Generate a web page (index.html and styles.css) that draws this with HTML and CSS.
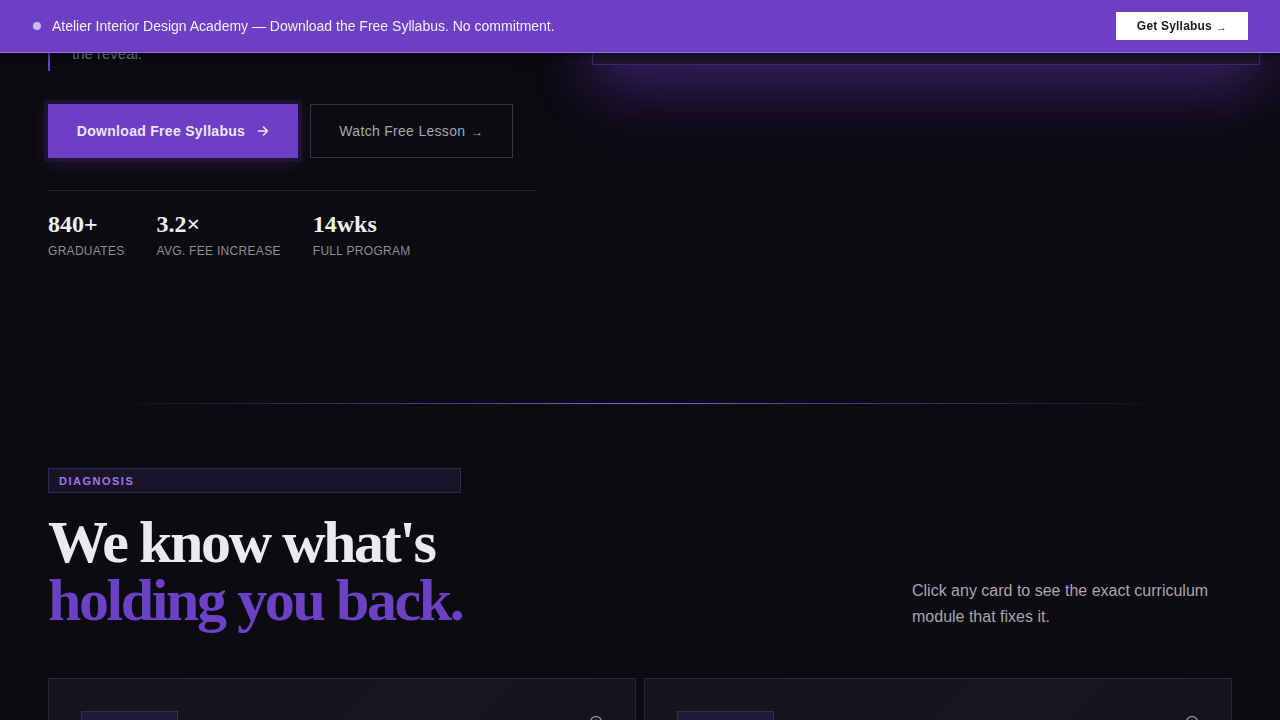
FILE: index.html
```html
<!DOCTYPE html>
<html lang="en">

<head>
    <meta charset="UTF-8">
    <meta name="viewport" content="width=device-width, initial-scale=1.0">
    <title>Atelier Interior Design Academy</title>
    <link rel="stylesheet" href="styles.css">
</head>

<body>
    <!-- sticky announcement bar -->
    <div class="topbar">
        <div class="topbar-msg">
            <span class="dot"></span>
            Atelier Interior Design Academy — Download the Free Syllabus. No commitment.
        </div>
        <a href="#" class="topbar-btn">Get Syllabus <span class="small-arrow">→</span></a>
    </div>

    <!-- hero -->
    <section class="hero">
        <div class="hero-left">
            <blockquote class="hero-quote">
                Every room tells a story. Our students learn to write it —<br>
                from the first sketch and mood board, all the way to<br>
                the reveal.
            </blockquote>

            <div class="hero-actions">
                <a href="#" class="btn btn-primary">Download Free Syllabus
                    <svg width="12" height="12" viewBox="0 0 12 12" fill="none" stroke="currentColor" stroke-width="1.6" stroke-linecap="round" stroke-linejoin="round">
                        <path d="M1.5 6h9M6.5 2l4 4-4 4" />
                    </svg>
                </a>
                <a href="#" class="btn btn-ghost">Watch Free Lesson <span class="ghost-arrow">→</span></a>
            </div>

            <div class="stats">
                <div class="stat">
                    <div class="stat-num">840+</div>
                    <div class="stat-label">Graduates</div>
                </div>
                <div class="stat">
                    <div class="stat-num">3.2×</div>
                    <div class="stat-label">Avg. Fee Increase</div>
                </div>
                <div class="stat">
                    <div class="stat-num">14wks</div>
                    <div class="stat-label">Full Program</div>
                </div>
            </div>
        </div>

        <div class="hero-right">
            <div class="hero-visual"></div>
        </div>
    </section>

    <div class="glow-line"></div>

    <!-- diagnosis -->
    <section class="diagnosis">
        <div class="tag">Diagnosis</div>
        <div class="diag-head">
            <h2>We know what's<br><span class="accent">holding you back.</span></h2>
            <p>Click any card to see the exact curriculum module that fixes it.</p>
        </div>

        <div class="cards">
            <div class="card">
                <div class="card-top">
                    <span class="card-chip">Problem 01</span>
                    <svg class="card-icon" width="14" height="14" viewBox="0 0 14 14" fill="none" stroke="#8d8a98" stroke-width="1.4">
                        <circle cx="7" cy="7" r="5.5" />
                        <path d="M7 4.5v5M4.5 7h5" />
                    </svg>
                </div>
            </div>
            <div class="card">
                <div class="card-top">
                    <span class="card-chip">Problem 02</span>
                    <svg class="card-icon" width="14" height="14" viewBox="0 0 14 14" fill="none" stroke="#8d8a98" stroke-width="1.4">
                        <circle cx="7" cy="7" r="5.5" />
                        <path d="M7 4.5v5M4.5 7h5" />
                    </svg>
                </div>
            </div>
        </div>
    </section>
</body>

</html>
```

FILE: styles.css
```css
/* base */
body {
    margin: 0;
    background-color: #0c0b10;
    color: #e9e7ef;
    font-family: "Liberation Sans", Arial, sans-serif;
    overflow: hidden;
}

a {
    text-decoration: none;
}

/* announcement bar */
.topbar {
    position: fixed;
    top: 0;
    left: 0;
    right: 0;
    z-index: 10;
    height: 52px;
    padding: 0 32px;
    display: flex;
    align-items: center;
    justify-content: space-between;
    background-color: #6c3fc5;
    border-bottom: 1px solid #9478dc;
    box-shadow: 0 2px 8px rgba(0, 0, 0, 0.6);
}

.topbar-msg {
    display: flex;
    align-items: center;
    font-size: 14px;
    color: #f3effb;
}

.dot {
    width: 8px;
    height: 8px;
    border-radius: 50%;
    background-color: #cbb8f1;
    margin: 0 11px 0 1px;
}

.topbar-btn {
    width: 132px;
    height: 28px;
    display: flex;
    align-items: center;
    justify-content: center;
    gap: 4px;
    background-color: #fff;
    color: #1b1a20;
    font-size: 12px;
    font-weight: bold;
    letter-spacing: 0.2px;
}

.small-arrow {
    font-size: 11px;
    font-weight: normal;
    position: relative;
    top: 1px;
}

/* hero */
.hero {
    margin-top: -6px;
    padding: 0 48px;
    display: grid;
    grid-template-columns: 488px 1fr;
    gap: 56px;
    height: 342px;
}

.hero-quote {
    margin: 0;
    padding: 0 0 5px 22px;
    border-left: 2px solid #6c3fc5;
    font-size: 15px;
    line-height: 24px;
    color: #7d7a88;
}

.hero-actions {
    display: flex;
    gap: 12px;
    margin-top: 33px;
}

.btn {
    height: 54px;
    box-sizing: border-box;
    display: flex;
    align-items: center;
    justify-content: center;
    font-size: 14px;
    letter-spacing: 0.3px;
}

.btn-primary {
    width: 250px;
    gap: 12px;
    background-color: #6c3fc5;
    color: #ece5fa;
    font-weight: bold;
    box-shadow: 0 0 0 4px rgba(60, 34, 110, 0.25), 0 4px 18px rgba(108, 63, 197, 0.25);
}

.btn-ghost {
    width: 203px;
    gap: 6px;
    border: 1px solid #37353d;
    color: #a9a7b0;
}

.ghost-arrow {
    font-size: 12px;
    position: relative;
    top: 1px;
}

.stats {
    margin-top: 32px;
    padding-top: 19px;
    border-top: 1px solid #222028;
    display: flex;
    gap: 32px;
}

.stat-num {
    font-family: "Liberation Serif", "Times New Roman", serif;
    font-weight: bold;
    font-size: 24px;
    line-height: 28px;
    color: #f1eff5;
}

.stat-label {
    margin-top: 6px;
    font-size: 12px;
    letter-spacing: 0.3px;
    text-transform: uppercase;
    color: #8f8d97;
}

.hero-visual {
    margin-top: -300px;
    height: 369px;
    margin-right: -28px;
    border: 1px solid #3b2a66;
    background: linear-gradient(180deg, #171326, #1d1530);
    box-shadow: 0 18px 50px rgba(108, 63, 197, 0.35), 0 40px 80px rgba(70, 35, 140, 0.25);
}

/* divider */
.glow-line {
    height: 1px;
    margin: 67px 100px 0;
    background: linear-gradient(90deg, transparent, #221f4a 12%, #4a3ea8 35%, #7a6ae0 50%, #4a3ea8 65%, #221f4a 88%, transparent);
}

/* diagnosis section */
.diagnosis {
    padding: 64px 48px 0;
}

.tag {
    width: 413px;
    height: 25px;
    box-sizing: border-box;
    padding-left: 10px;
    display: flex;
    align-items: center;
    background-color: #1a1428;
    border: 1px solid #33265a;
    color: #a574e6;
    font-size: 11px;
    font-weight: bold;
    letter-spacing: 1.5px;
    text-transform: uppercase;
}

.diag-head {
    margin-top: 20px;
    display: flex;
    justify-content: space-between;
    align-items: flex-end;
}

.diag-head h2 {
    margin: 0;
    font-family: "Liberation Serif", "Times New Roman", serif;
    font-size: 60px;
    line-height: 58px;
    letter-spacing: -2.4px;
    color: #ece9f1;
}

.accent {
    color: #6b41c6;
}

.diag-head p {
    width: 320px;
    margin: 0 0 -1px;
    font-size: 16px;
    line-height: 26px;
    color: #a8a6b1;
}

.cards {
    margin-top: 49px;
    display: grid;
    grid-template-columns: 1fr 1fr;
    gap: 8px;
}

.card {
    height: 200px;
    padding: 32px;
    border: 1px solid #2a2542;
    background: linear-gradient(135deg, #15131b, #17151e 50%, #121118);
}

.card-top {
    display: flex;
    justify-content: space-between;
    align-items: flex-start;
}

.card-chip {
    width: 97px;
    height: 40px;
    box-sizing: border-box;
    border: 1px solid #352a55;
    background-color: #211a35;
    color: #a574e6;
    font-size: 10px;
    letter-spacing: 1.2px;
    text-transform: uppercase;
    display: flex;
    align-items: center;
    justify-content: center;
}

.card-icon {
    margin-top: 4px;
}
```
